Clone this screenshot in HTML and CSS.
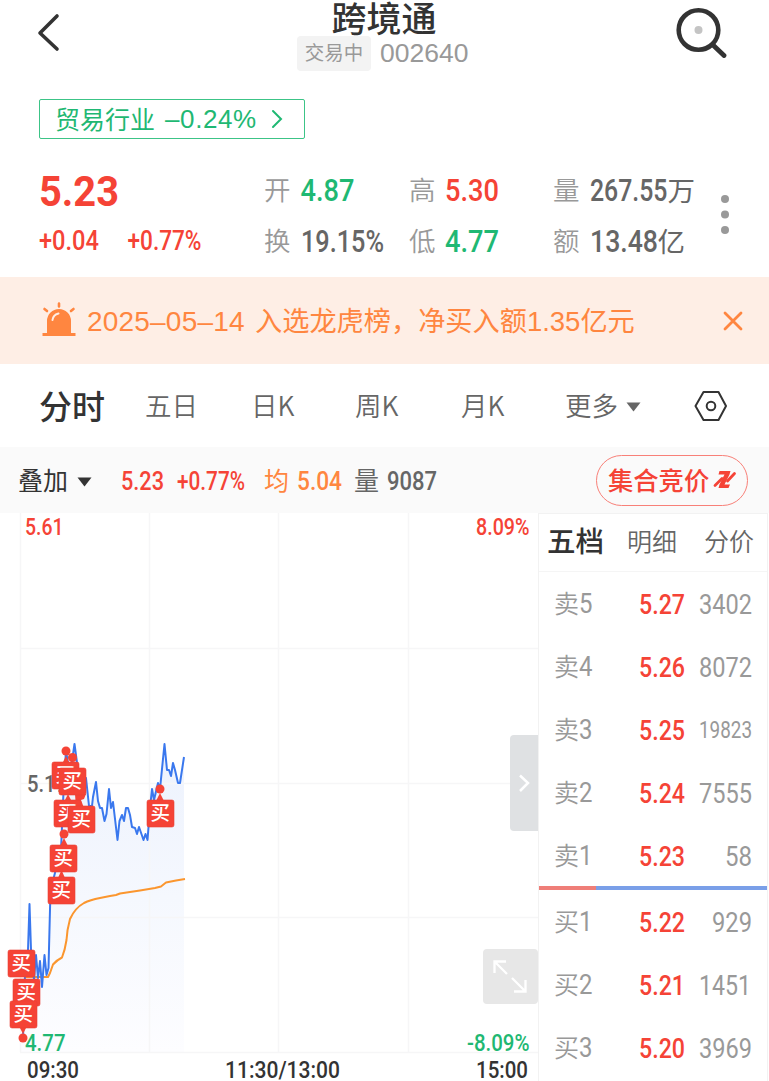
FILE: index.html
```html
<!DOCTYPE html>
<html lang="zh-CN">
<head>
<meta charset="utf-8">
<title>跨境通 002640</title>
<link rel="stylesheet" href="styles.css">
</head>
<body>
<div class="app">
  <header class="head">
    <svg class="back" width="24" height="40" viewBox="0 0 24 40"><path d="M20 3 3 20 20 36" /></svg>
    <div class="name">
      <h1>跨境通</h1>
      <div class="code"><span class="status">交易中</span><span class="ticker">002640</span></div>
    </div>
    <svg class="search" width="52" height="52" viewBox="0 0 52 52"><circle class="lens" cx="23.500" cy="24" r="19.800"/><circle class="spot" cx="23.500" cy="24" r="4"/><path d="M38 39 49 49.500"/></svg>
  </header>

  <div class="industry-row">
    <a class="industry"><span class="sector">贸易行业</span><span class="pct">–0.24%</span><svg width="12" height="20" viewBox="0 0 12 20"><path d="M2 2 10 10 2 18"/></svg></a>
  </div>

  <section class="quote">
    <div class="price">
      <svg class="num bold red" width="80" height="32"><text x="-1" y="31" font-size="43" textLength="80" lengthAdjust="spacingAndGlyphs">5.23</text></svg>
      <div class="delta">
        <svg class="num red" width="60" height="22"><text x="-1" y="21" font-size="27.500" textLength="60" lengthAdjust="spacingAndGlyphs">+0.04</text></svg>
        <svg class="num red" width="75" height="22"><text x="-0.500" y="21" font-size="27.500" textLength="74" lengthAdjust="spacingAndGlyphs">+0.77%</text></svg>
      </div>
    </div>
    <dl class="stats">
      <div><dt>开</dt><dd><svg class="num green" width="54" height="24"><text x="-0.500" y="23.500" font-size="32" textLength="54" lengthAdjust="spacingAndGlyphs">4.87</text></svg></dd></div>
      <div><dt>高</dt><dd><svg class="num red" width="54" height="24"><text x="-1" y="23.500" font-size="32" textLength="54" lengthAdjust="spacingAndGlyphs">5.30</text></svg></dd></div>
      <div><dt>量</dt><dd><svg class="num gray" width="78" height="24"><text x="0" y="23.500" font-size="31" textLength="77.500" lengthAdjust="spacingAndGlyphs">267.55</text></svg><span>万</span></dd></div>
      <div><dt>换</dt><dd><svg class="num gray" width="84" height="24"><text x="0" y="23.500" font-size="32" textLength="83" lengthAdjust="spacingAndGlyphs">19.15%</text></svg></dd></div>
      <div><dt>低</dt><dd><svg class="num green" width="54" height="24"><text x="-1" y="23.500" font-size="32" textLength="54" lengthAdjust="spacingAndGlyphs">4.77</text></svg></dd></div>
      <div><dt>额</dt><dd><svg class="num gray" width="68" height="24"><text x="0" y="23.500" font-size="32" textLength="68" lengthAdjust="spacingAndGlyphs">13.48</text></svg><span class="yi">亿</span></dd></div>
    </dl>
    <svg class="more" width="10" height="42" viewBox="0 0 10 42"><circle cx="5" cy="5" r="4"/><circle cx="5" cy="20.500" r="4"/><circle cx="5" cy="36" r="4"/></svg>
  </section>

  <section class="notice">
    <svg class="alarm" width="34" height="36" viewBox="0 0 34 36">
      <path class="solid" d="M5 31V19a12 12 0 0 1 24 0v12h4.500v3H.5v-3z"/>
      <path class="ray" d="M17 1.500v3M2.500 7 5 9M31.500 7 29 9"/>
      <path class="shine" d="M10.500 18q.5-5 6-6.500"/>
    </svg>
    <p><span class="date">2025–05–14</span><span class="msg">入选龙虎榜，净买入额<span class="amt">1.35</span>亿元</span></p>
    <svg class="close" width="20" height="20" viewBox="0 0 20 20"><path d="M2 2 18 18M18 2 2 18"/></svg>
  </section>

  <nav class="tabs">
    <span class="active">分时</span><span>五日</span><span>日K</span><span>周K</span><span>月K</span><span>更多</span>
    <svg class="caret" width="15" height="10" viewBox="0 0 15 10"><path d="M.5.5H14.500L7.500 9.500z"/></svg>
    <svg class="hex" width="34" height="32" viewBox="0 0 34 32"><path d="M9.500 2H24.500L32 16 24.500 30H9.500L1.500 16z"/><circle cx="17" cy="16" r="4.300"/></svg>
  </nav>

  <div class="info">
    <span class="overlay">叠加</span><svg class="caret dark" width="15" height="10" viewBox="0 0 15 10"><path d="M.5.5H14.500L7.500 9.500z"/></svg>
    <svg class="num red i-price" width="44" height="20"><text x="0" y="19.500" font-size="25.500" textLength="43" lengthAdjust="spacingAndGlyphs">5.23</text></svg>
    <svg class="num red i-pct" width="69" height="20"><text x="0" y="19.500" font-size="25.500" textLength="68" lengthAdjust="spacingAndGlyphs">+0.77%</text></svg>
    <span class="avg">均</span>
    <svg class="num orange" width="46" height="20"><text x="-1" y="19.500" font-size="25.500" textLength="45" lengthAdjust="spacingAndGlyphs">5.04</text></svg>
    <span class="vol">量</span>
    <svg class="num gray" width="51" height="20"><text x="-1" y="19.500" font-size="25.500" textLength="50" lengthAdjust="spacingAndGlyphs">9087</text></svg>
    <a class="auction"><span>集合竞价</span><svg width="24" height="20" viewBox="0 0 24 20"><path class="thin" d="M2 15.500 9 8.500M14.500 11 21.500 3.500"/><path class="solid" d="M6.500 1H17.500L16.500 4.500 11.500 14.500H17L15.500 18H5.500L6.500 14.500 11.500 4.500H5.500z"/></svg></a>
  </div>

  <main class="body">
    <section class="chart">
      <svg width="538" height="568" viewBox="0 513 538 568">
        <defs><linearGradient id="area" x1="0" y1="744" x2="0" y2="1052" gradientUnits="userSpaceOnUse"><stop offset="0" stop-color="#edf2fd"/><stop offset=".5" stop-color="#f5f8fe"/><stop offset="1" stop-color="#fdfdff"/></linearGradient>
          <g id="buy"><rect width="27" height="27" rx="2"/><text x="3.500" y="20" font-size="19.500">买</text></g></defs>
        <path class="area" fill="url(#area)" d="M23 1038 25 975 28 950 29.500 904 31 950 34 980 36 955 38 978 40 961 42 987 44.500 955 46.500 975 48.500 968 50.500 890 61 850 64 780 66 751 70 775 74.500 744 78 770 86 775 89 806 92 806 96 782 98 801 102 808 104.500 821 109 789 111 808 113 802 117.500 840 119.500 821 126 808 128 808 132 827 137 834 143.500 840 147.500 840 152 789 158 783 160 789 164.500 744 167 770 171 776 173 763 178 783 180 783 184 757V1052H20z"/>
        <path class="grid" d="M20.500 513V1052M149.500 513V1052M278.500 513V1052M408.500 513V1052M20 648.500H538M20 783.500H538M20 917.500H538M20 1052.500H538"/>
        <g class="labels" font-size="24">
          <text class="red" x="25" y="534.500" textLength="38.500" lengthAdjust="spacingAndGlyphs">5.61</text>
          <text class="red" x="476" y="534.500" textLength="53.500" lengthAdjust="spacingAndGlyphs">8.09%</text>
          <text class="gray" x="27" y="792" textLength="40" lengthAdjust="spacingAndGlyphs">5.19</text>
          <text class="green" x="25" y="1050.500" textLength="40.500" lengthAdjust="spacingAndGlyphs">4.77</text>
          <text class="green" x="467" y="1050.500" textLength="62.500" lengthAdjust="spacingAndGlyphs">-8.09%</text>
          <text class="dark" x="27" y="1077.500" textLength="52" lengthAdjust="spacingAndGlyphs">09:30</text>
          <text class="dark" x="225" y="1077.500" textLength="115" lengthAdjust="spacingAndGlyphs">11:30/13:00</text>
          <text class="dark" x="476" y="1077.500" textLength="52" lengthAdjust="spacingAndGlyphs">15:00</text>
        </g>
        <path class="line-avg" d="M25 977H48L50 973 53 964.500Q57 960 62 957.500 65 950 66.500 940 67 930 70 919 75 908 84 903 90 900 100 898L110 896 116 895 120 893.500 140 890.500 155 888 161 886.500 166 882.500 176 880.500 185 879"/>
        <path class="line-price" d="M23 1038 25 975 28 950 29.500 904 31 950 34 980 36 955 38 978 40 961 42 987 44.500 955 46.500 975 48.500 968 50.500 890 61 850 64 780 66 751 70 775 74.500 744 78 770 82 790 86 778 89 806 92 806 93 797 96 782 98 801 100 808 102 808 104.500 821 106.500 814 109 789 111 808 113 802 117.500 840 119.500 821 122 815 124 821 126 808 128 808 130 815 132 827 135 828 137 834 139 827 143.500 840 145.500 834 147.500 840 150 808 152 789 154 800 158 783 160 789 164.500 744 167 770 169 770 171 776 173 763 175 770 178 783 180 783 184 757"/>
        <g class="marks">
          <path d="M62 764 66 756 70 764zM64 802 68 794 72 802zM156 801 160 793 164 801zM60 846 64 838 68 846zM58 878 61.500 870 65 878zM19 1026H27L23 1034zM75 794H86L84 799 81 800 84 808H76z"/>
          <circle cx="66" cy="751" r="4.500"/><circle cx="72.500" cy="757.500" r="4.500"/><circle cx="160" cy="789" r="4.500"/><circle cx="64" cy="834" r="4.500"/><circle cx="23" cy="1038" r="4.500"/>
          <use href="#buy" x="52" y="762"/><use href="#buy" x="59" y="768"/><use href="#buy" x="54" y="800"/><use href="#buy" x="68" y="806"/><use href="#buy" x="147" y="800"/><use href="#buy" x="50" y="845"/><use href="#buy" x="48" y="877"/><use href="#buy" x="8" y="950"/><use href="#buy" x="13" y="979"/><use href="#buy" x="10" y="1001"/>
        </g>
        <path class="handle" d="M538 735H514Q510 735 510 739V827Q510 831 514 831H538z"/>
        <path class="handle-arrow" d="M520 775.500 528 783 520 791"/>
        <rect class="expand" x="483" y="949" width="55" height="55" rx="4"/>
        <path class="expand-arrow" d="M507 974 494.500 961.500M494.500 973V961.500H506M512 978 525.500 991.500M525.500 980V991.500H514"/>
      </svg>
    </section>
    <aside class="book">
      <div class="book-tabs"><span class="active">五档</span><span>明细</span><span>分价</span></div>
      <div class="rows">
        <div class="row"><span class="side">卖<i>5</i></span><svg class="num red" width="47" height="21"><text x="0" y="20.500" font-size="28.500" textLength="46" lengthAdjust="spacingAndGlyphs">5.27</text></svg><svg class="num light" width="54" height="21"><text x="0" y="20.500" font-size="28" textLength="53" lengthAdjust="spacingAndGlyphs">3402</text></svg></div>
        <div class="row"><span class="side">卖<i>4</i></span><svg class="num red" width="47" height="21"><text x="0" y="20.500" font-size="28.500" textLength="46" lengthAdjust="spacingAndGlyphs">5.26</text></svg><svg class="num light" width="54" height="21"><text x="0" y="20.500" font-size="28" textLength="53" lengthAdjust="spacingAndGlyphs">8072</text></svg></div>
        <div class="row"><span class="side">卖<i>3</i></span><svg class="num red" width="47" height="21"><text x="0" y="20.500" font-size="28.500" textLength="46" lengthAdjust="spacingAndGlyphs">5.25</text></svg><svg class="num light" width="54" height="21"><text x="0" y="18.500" font-size="23.500" textLength="53" lengthAdjust="spacingAndGlyphs">19823</text></svg></div>
        <div class="row"><span class="side">卖<i>2</i></span><svg class="num red" width="47" height="21"><text x="0" y="20.500" font-size="28.500" textLength="46" lengthAdjust="spacingAndGlyphs">5.24</text></svg><svg class="num light" width="54" height="21"><text x="0" y="20.500" font-size="28" textLength="53" lengthAdjust="spacingAndGlyphs">7555</text></svg></div>
        <div class="row"><span class="side">卖<i>1</i></span><svg class="num red" width="47" height="21"><text x="0" y="20.500" font-size="28.500" textLength="46" lengthAdjust="spacingAndGlyphs">5.23</text></svg><svg class="num light" width="54" height="21"><text x="26" y="20.500" font-size="28" textLength="27" lengthAdjust="spacingAndGlyphs">58</text></svg></div>
      </div>
      <div class="ratio"><span class="sell"></span><span class="buy"></span></div>
      <div class="rows bids">
        <div class="row"><span class="side">买<i>1</i></span><svg class="num red" width="47" height="21"><text x="0" y="20.500" font-size="28.500" textLength="46" lengthAdjust="spacingAndGlyphs">5.22</text></svg><svg class="num light" width="54" height="21"><text x="13" y="20.500" font-size="28" textLength="40" lengthAdjust="spacingAndGlyphs">929</text></svg></div>
        <div class="row"><span class="side">买<i>2</i></span><svg class="num red" width="47" height="21"><text x="0" y="20.500" font-size="28.500" textLength="46" lengthAdjust="spacingAndGlyphs">5.21</text></svg><svg class="num light" width="54" height="21"><text x="0" y="20.500" font-size="28" textLength="52" lengthAdjust="spacingAndGlyphs">1451</text></svg></div>
        <div class="row"><span class="side">买<i>3</i></span><svg class="num red" width="47" height="21"><text x="0" y="20.500" font-size="28.500" textLength="46" lengthAdjust="spacingAndGlyphs">5.20</text></svg><svg class="num light" width="54" height="21"><text x="0" y="20.500" font-size="28" textLength="53" lengthAdjust="spacingAndGlyphs">3969</text></svg></div>
      </div>
    </aside>
  </main>
</div>
</body>
</html>
```

FILE: styles.css
```css
* { box-sizing: border-box; }
body, h1, p, dl, dd { margin: 0; }
body {
  background: #fff;
  color: #666;
  font-family: "Liberation Sans", "Noto Sans CJK SC", sans-serif;
}
svg { display: block; flex: none; fill: none; }
.app { width: 769px; height: 1081px; overflow: hidden; }

.num { overflow: visible; font-family: Roboto, sans-serif; font-weight: 500; }
.bold { font-weight: 700; }
.red { fill: #f54336; }
.green { fill: #1fb873; }
.gray { fill: #666; }
.light { fill: #999; font-weight: 450; }
.orange { fill: #ff8640; }
.dark { fill: #333; }

/* Header */
.head { display: flex; height: 99px; padding: 0 42px 0 37px; align-items: flex-start; justify-content: space-between; }
.back { margin-top: 13px; stroke: #333; stroke-width: 3.6; stroke-linecap: round; stroke-linejoin: round; }
.name { width: 180px; margin-left: 32px; }
h1 { height: 35px; padding-left: 0; color: #333; font: 500 35px/33px "Noto Sans CJK SC", sans-serif; text-align: center; }
.code { display: flex; gap: 9px; align-items: center; color: #999; margin-left: 3px; }
.status { flex: none; width: 74px; height: 35px; border-radius: 4px; background: #f3f3f3; font-size: 19.5px; line-height: 35px; text-align: center; }
.ticker { font-size: 26.500px; line-height: 37px; }
.search { margin-top: 6px; stroke: #333; }
.lens { stroke-width: 4.6; }
.search path { stroke-width: 4.8; stroke-linecap: round; }
.spot { fill: #c4c4c4; stroke: none; }

/* Industry link */
.industry-row { padding-left: 39px; height: 76px; }
.industry { display: flex; align-items: center; width: 266px; height: 40px; padding-left: 15px; border: 1.5px solid #3cc487; border-radius: 2px; color: #1fb873; font-size: 25px; }
.sector { margin-top: -2px; }
.industry .pct { margin-left: 10px; letter-spacing: .6px; font-size: 26px; }
.industry svg { margin-left: 14px; stroke: #1fb873; stroke-width: 2; stroke-linecap: round; }

/* Quote */
.quote { display: flex; height: 102px; padding-left: 40px; align-items: flex-start; }
.price { width: 224px; }
.delta { display: flex; gap: 28px; margin-top: 22px; }
.stats { display: grid; grid-template-columns: 145px 144px 167px; grid-template-rows: 51px 51px; width: 456px; margin-top: -12px; }
.stats > div { display: flex; align-items: center; gap: 10px; }
dt { color: #999; font: 350 26.500px/36px "Noto Sans CJK SC", sans-serif; }
dd { display: flex; align-items: center; font: 400 27.500px/36px "Noto Sans CJK SC", sans-serif; }
.more { margin-top: 19px; fill: #999; }

/* Notice */
.notice { display: flex; align-items: center; height: 87px; padding-left: 42px; background: #feeee5; color: #ff8640; }
.alarm { margin-top: -2px; }
.alarm .solid { fill: #ff8640; }
.alarm .ray { stroke: #ff8640; stroke-width: 2.6; stroke-linecap: round; }
.alarm .shine { stroke: #feeee5; stroke-width: 2; stroke-linecap: round; }
.notice p { display: flex; align-items: center; width: 647px; padding-left: 11px; white-space: nowrap; }
.date { width: 168px; margin-top: 2px; font-size: 28px; letter-spacing: .2px; }
.msg { margin-top: -3px; font-size: 27.200px; }
.amt { font-size: 27.500px; }
.close { stroke: #ff8640; stroke-width: 2.8; stroke-linecap: round; }

/* Period tabs */
.tabs { display: grid; grid-template-columns: 106px 106px 104px 106px 104px 61px 68px 40px; align-items: center; height: 83px; padding-left: 39px; font: 350 26.500px/38px "Noto Sans CJK SC", sans-serif; }
.tabs span { margin-top: -2px; }
.tabs .caret { margin-top: 2px; }
.tabs .active { color: #333; font-size: 33px; font-weight: 500; }
.caret { fill: #666; }
.caret.dark { fill: #333; }
.hex { stroke: #333; stroke-width: 2; stroke-linejoin: round; }

/* Info bar */
.info { display: flex; align-items: center; height: 66px; padding-left: 18px; background: #fafafa; font: 400 25px/36px "Noto Sans CJK SC", sans-serif; }
.info > span, .auction span { margin-top: -2px; }
.overlay { width: 59px; color: #333; }
.info .caret { margin-top: 3px; }
.i-price { margin-left: 29px; }
.i-pct { margin-left: 12px; }
.avg { width: 34px; margin-left: 18px; color: #ff8640; }
.vol { width: 34px; margin-left: 10px; }
.auction { display: flex; align-items: center; gap: 4px; width: 152px; height: 51px; margin-left: 157px; padding-left: 11px; border: 1.5px solid #f88078; border-radius: 26px; color: #f54336; font-weight: 500; font-size: 25.300px; }
.auction .thin { stroke: #f54336; stroke-width: 2.8; stroke-linecap: round; }
.auction .solid { fill: #f54336; }

/* Chart and order book */
.body { display: flex; height: 568px; }
.chart { width: 538px; }
.grid { stroke: #f6f6f7; stroke-width: 1.5; }
.labels { font-family: Roboto, sans-serif; font-weight: 500; }
.line-price { stroke: #3a78ee; stroke-width: 2; stroke-linejoin: round; }
.line-avg { stroke: #fb962e; stroke-width: 2; stroke-linejoin: round; }
.marks { fill: #f54336; }
#buy rect { fill: #f54336; stroke: #e83f38; stroke-width: .6; }
#buy text { fill: #fff; font-family: "Noto Sans CJK SC", sans-serif; font-weight: 500; }
.handle { fill: #dfe1e3; }
.handle-arrow { stroke: #fff; stroke-width: 2.5; }
.expand { fill: #e7e7e7; }
.expand-arrow { stroke: #fff; stroke-width: 2.3; }

.book { width: 230px; border: solid #f2f2f2; border-width: 1px 1.500px 0; }
.book-tabs { display: grid; grid-template-columns: 80px 77px 60px; align-items: center; height: 58px; padding: 0 0 6px 8px; border-bottom: 1.500px solid #f5f5f5; font: 350 25px/38px "Noto Sans CJK SC", sans-serif; }
.book-tabs .active { color: #333; font-size: 28.500px; font-weight: 500; }
.rows { display: grid; grid-auto-rows: 63px; height: 314px; padding-bottom: 1px; }
.bids { height: 190px; }
.row { display: grid; grid-template-columns: 85px 60px 60px; align-items: center; padding: 0 0 1px 15px; }
.side { color: #999; font: 350 25px/36px "Noto Sans CJK SC", sans-serif; }
.side i { font: 450 27.500px/36px Roboto, sans-serif; display: inline-block; transform: scaleX(.87); transform-origin: left; }
.ratio { display: flex; height: 4px; }
.ratio .sell { width: 57px; background: #ef7e78; }
.ratio .buy { flex: 1; background: #7a9fe8; }
```
